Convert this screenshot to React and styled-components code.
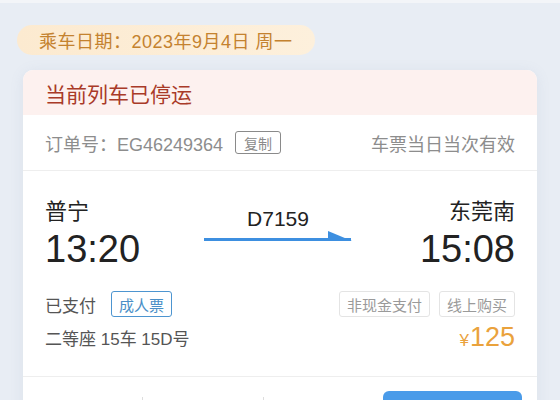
import React from 'react'
import styled, { createGlobalStyle } from 'styled-components'

const GlobalStyle = createGlobalStyle`
    body {
        margin: 0;
        background: #e8edf4;
        font-family: "Liberation Sans", "Noto Sans CJK SC", sans-serif;
    }
`

function App() {
    return (
        <>
            <GlobalStyle />
            <Page>
                <DatePill>乘车日期：2023年9月4日 周一</DatePill>
                <Card>
                    <Notice>当前列车已停运</Notice>
                    <OrderRow>
                        <OrderNo>
                            订单号：EG46249364
                            <Tag $tone="dark">复制</Tag>
                        </OrderNo>
                        <span>车票当日当次有效</span>
                    </OrderRow>

                    <Trip>
                        <Stations>
                            <Station>
                                <StationName>普宁</StationName>
                                <Time>13:20</Time>
                            </Station>
                            <TrainInfo>
                                <TrainNo>D7159</TrainNo>
                                <svg width="148" height="11" viewBox="0 0 148 11">
                                    <rect x="0" y="7" width="147" height="3" fill="#3d8fe0" />
                                    <path d="M124 0 L148 10 L124 10 Z" fill="#3d8fe0" />
                                </svg>
                            </TrainInfo>
                            <Station $right>
                                <StationName>东莞南</StationName>
                                <Time>15:08</Time>
                            </Station>
                        </Stations>

                        <InfoRow>
                            <Group>
                                <Label>已支付</Label>
                                <Tag $tone="blue">成人票</Tag>
                            </Group>
                            <Group>
                                <Tag $tone="gray">非现金支付</Tag>
                                <Tag $tone="gray">线上购买</Tag>
                            </Group>
                        </InfoRow>
                        <InfoRow $second>
                            <Label>二等座 15车 15D号</Label>
                            <Price><small>¥</small>125</Price>
                        </InfoRow>
                    </Trip>

                    <Actions>
                        <Action>退票</Action>
                        <Action>改签</Action>
                        <Action $last>变更到站</Action>
                        <PrimaryButton>
                            <ButtonIcon />
                            分享行程
                        </PrimaryButton>
                    </Actions>
                </Card>
            </Page>
        </>
    )
}

const Page = styled.div`
    border-top: 3px solid #f3f5f8;
    padding-top: 22px;
    padding-bottom: 40px;
`
const DatePill = styled.div`
    display: inline-flex;
    align-items: center;
    height: 30px;
    margin-left: 17px;
    padding: 0 22px 0 22px;
    border-radius: 15px;
    background: linear-gradient(90deg, #fcead0, #fdf0dc);
    color: #c4822f;
    font-size: 18px;
    letter-spacing: 0.5px;
`
const Card = styled.div`
    margin: 15px 23px 0 23px;
    background: #fff;
    border-radius: 10px;
    overflow: hidden;
    box-shadow: 0 2px 14px rgba(120, 140, 170, 0.12);
`
const Notice = styled.div`
    height: 45px;
    display: flex;
    align-items: center;
    padding: 0 22px;
    background: #fdf1ef;
    color: #a93a28;
    font-size: 21px;
`
const OrderRow = styled.div`
    height: 55px;
    display: flex;
    align-items: center;
    justify-content: space-between;
    padding: 0 22px;
    border-bottom: 1px solid #eeeeee;
    color: #8d8d8d;
    font-size: 18px;
`
const OrderNo = styled.div`
    display: flex;
    align-items: center;
    gap: 12px;
`
const Tag = styled.span`
    display: inline-flex;
    align-items: center;
    height: ${p => (p.$tone === 'dark' ? '21px' : '24px')};
    padding: 0 ${p => (p.$tone === 'dark' ? '8px' : '7px')};
    border-radius: 3px;
    font-size: ${p => (p.$tone === 'dark' ? '14px' : '15px')};
    border: 1px solid ${p =>
        p.$tone === 'blue' ? '#4d95d0' : p.$tone === 'gray' ? '#e4e4e4' : '#8a8a8a'};
    color: ${p =>
        p.$tone === 'blue' ? '#4a8fc7' : p.$tone === 'gray' ? '#9a9a9a' : '#8a8a8a'};
`
const Trip = styled.div`
    padding: 26px 22px 25px;
    border-bottom: 1px solid #eeeeee;
`
const Stations = styled.div`
    display: grid;
    grid-template-columns: 1fr auto 1fr;
`
const Station = styled.div`
    display: flex;
    flex-direction: column;
    align-items: ${p => (p.$right ? 'flex-end' : 'flex-start')};
    color: #222;
`
const StationName = styled.div`
    font-size: 22px;
    line-height: 30px;
`
const Time = styled.div`
    font-size: 38px;
    line-height: 44px;
`
const TrainInfo = styled.div`
    display: flex;
    flex-direction: column;
    align-items: center;
    padding-top: 10px;
    margin-left: -4px;
`
const TrainNo = styled.div`
    font-size: 21px;
    line-height: 24px;
    color: #222;
`
const InfoRow = styled.div`
    display: flex;
    align-items: center;
    justify-content: space-between;
    height: ${p => (p.$second ? '28px' : '30px')};
    margin-top: ${p => (p.$second ? '4px' : '18px')};
`
const Group = styled.div`
    display: flex;
    align-items: center;
    gap: 9px;
`
const Label = styled.span`
    font-size: 17px;
    color: #555;
    margin-right: 6px;
`
const Price = styled.span`
    color: #eaa23c;
    font-size: 27px;

    small {
        font-size: 17px;
        margin-right: 1px;
    }
`
const Actions = styled.div`
    display: flex;
    align-items: center;
    height: 64px;
    padding-right: 15px;
`
const Action = styled.div`
    flex: 1;
    text-align: center;
    font-size: 17px;
    color: #555;
    border-right: ${p => (p.$last ? 'none' : '1px solid #ddd')};
`
const PrimaryButton = styled.div`
    width: 139px;
    height: 36px;
    display: flex;
    align-items: center;
    justify-content: center;
    gap: 8px;
    border-radius: 6px;
    background: #4a9be9;
    color: #fff;
    font-size: 17px;
`
const ButtonIcon = styled.span`
    width: 12px;
    height: 14px;
    border: 2px solid #fff;
    border-radius: 2px;
`

export default App
